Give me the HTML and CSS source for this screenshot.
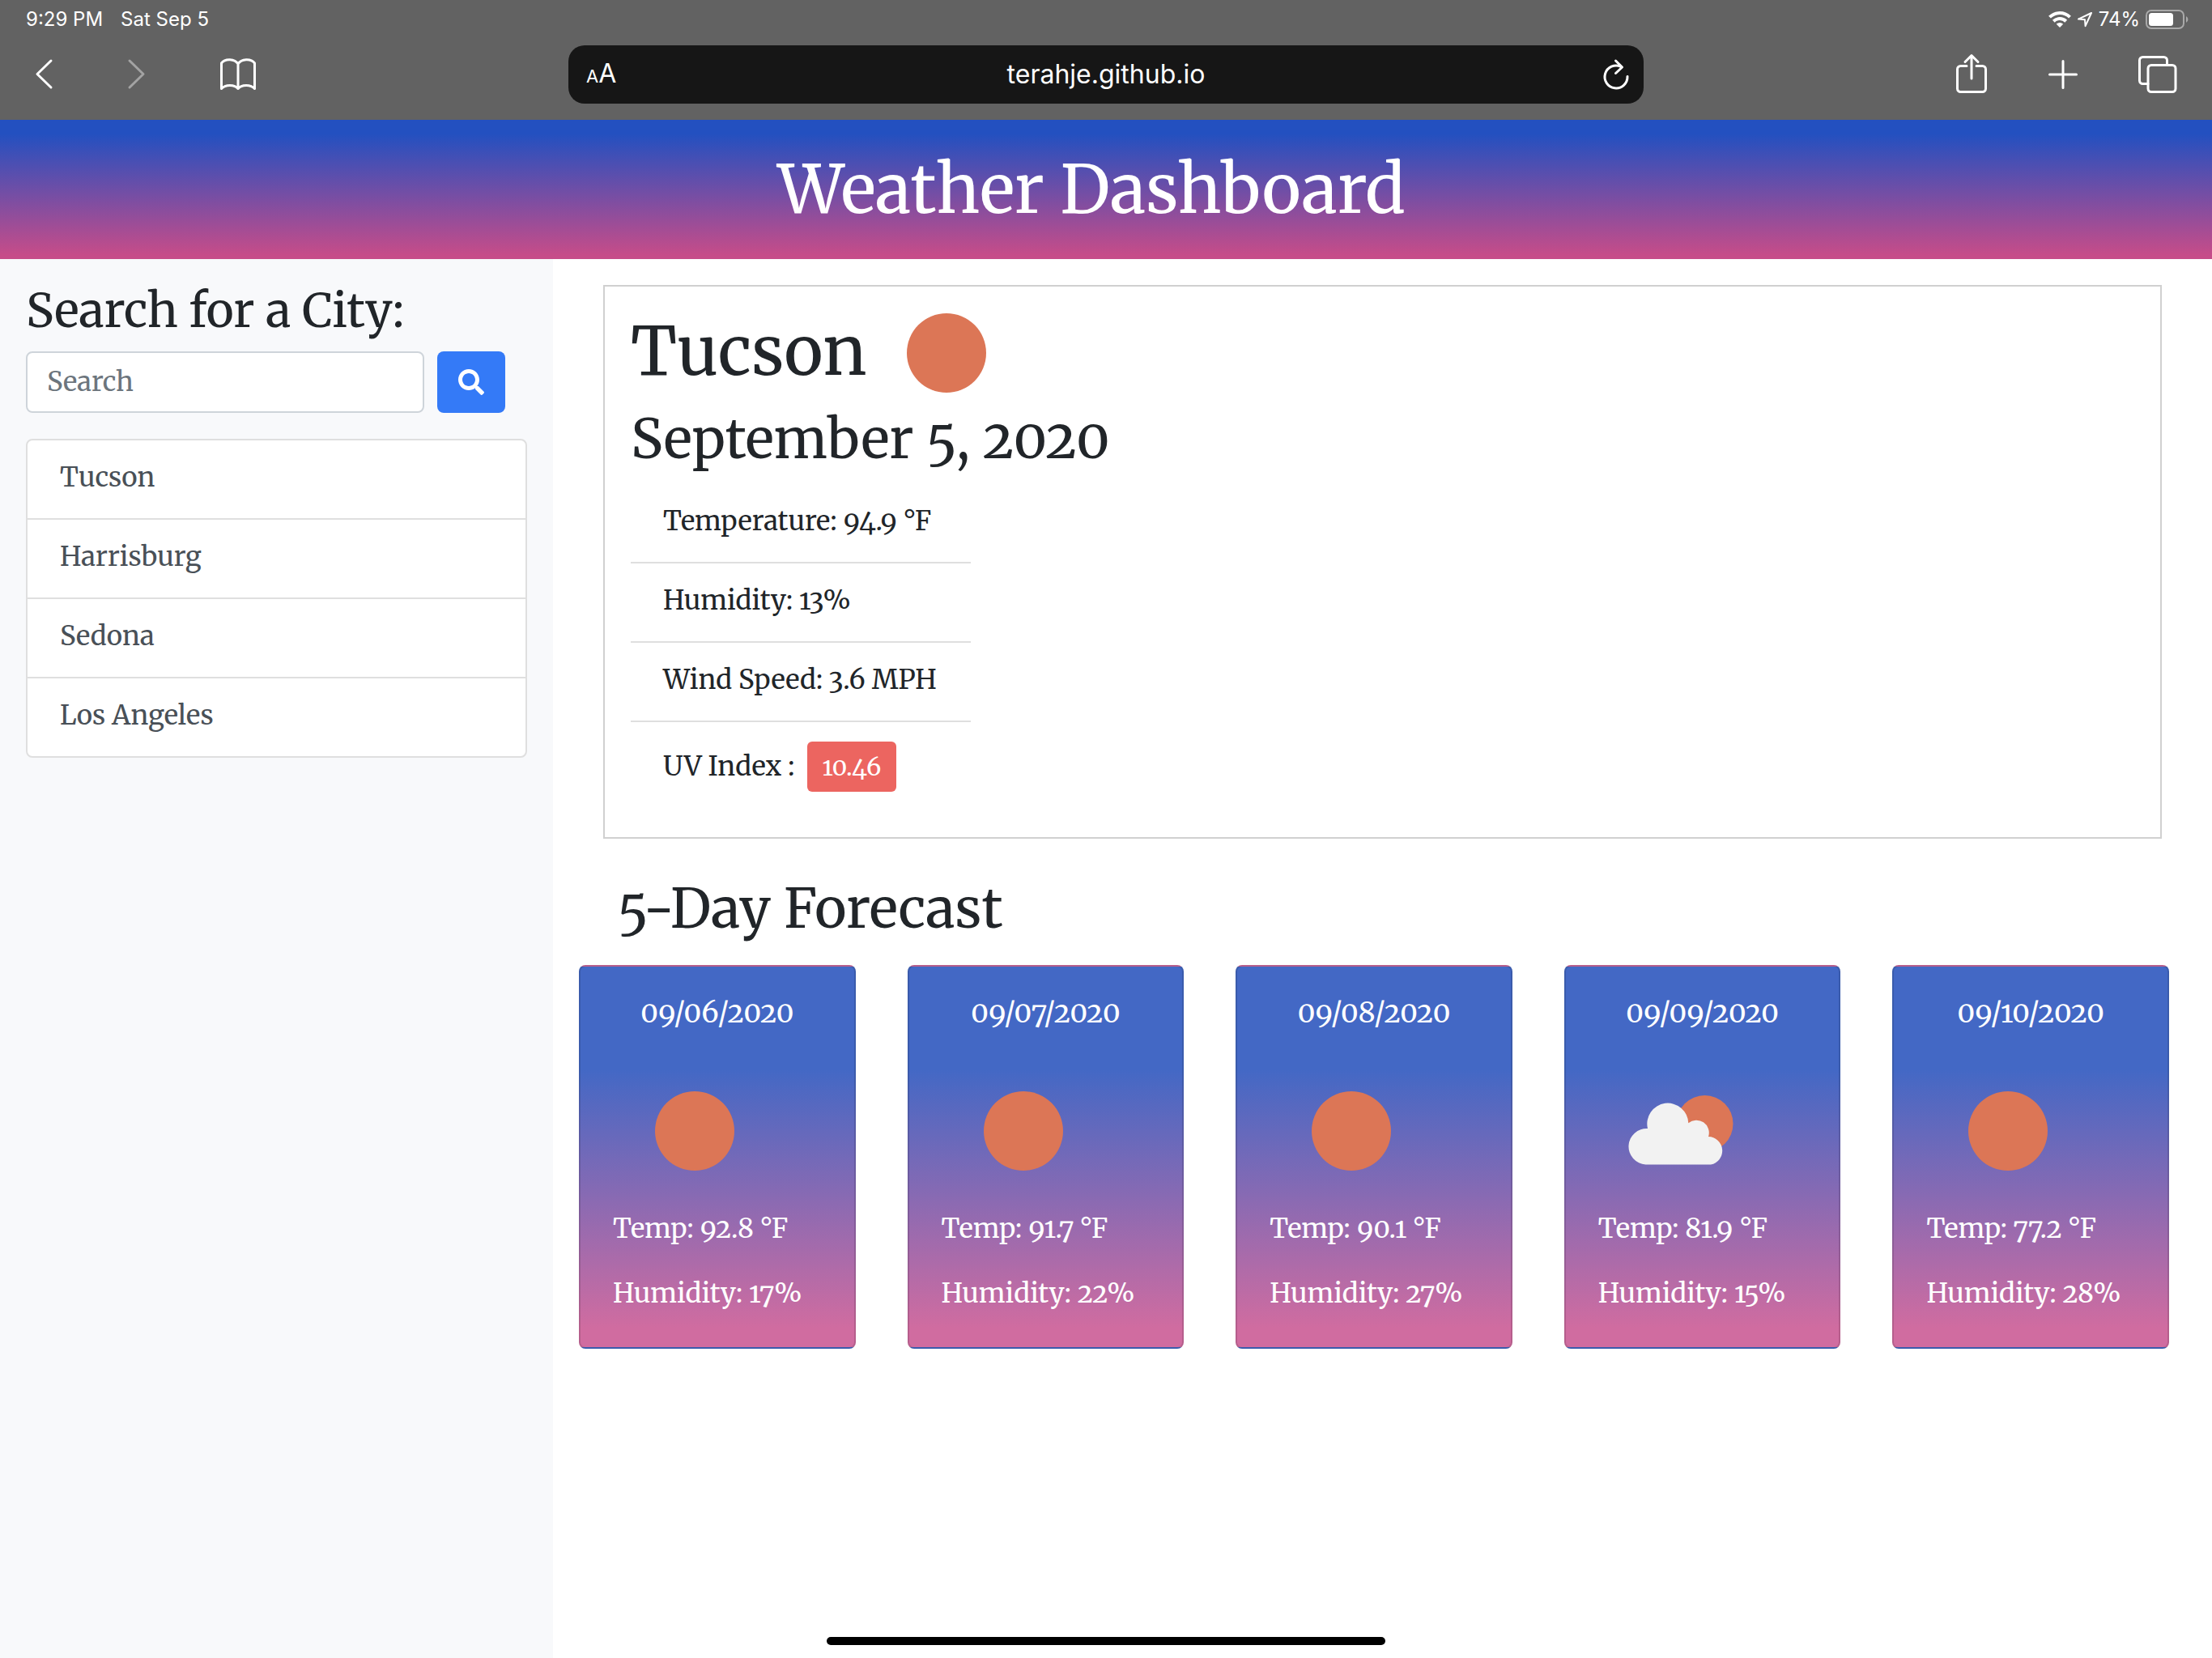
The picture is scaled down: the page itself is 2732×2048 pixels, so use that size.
FILE: index.html
```html
<!DOCTYPE html>
<html lang="en">
<head>
<meta charset="utf-8">
<meta name="viewport" content="width=device-width, initial-scale=1">
<title>Weather Dashboard</title>
<link rel="stylesheet" href="styles.css">
</head>
<body>
<div class="browser">
  <div class="status">
    <div class="status-side"><span>9:29 PM</span><span>Sat Sep 5</span></div>
    <div class="status-side status-right">
      <svg class="wifi" viewBox="0 0 28 22" aria-hidden="true"><g fill="none" stroke="#fff" stroke-width="4"><path d="M1.5 8.2a17.800 17.800 0 0 1 25 0"/><path d="M6.300 13.200a11 11 0 0 1 15.400 0"/></g><path d="M14 21l-4.200-4.300a6 6 0 0 1 8.400 0z" fill="#fff"/></svg>
      <svg class="locate" viewBox="0 0 20 20" aria-hidden="true"><path d="M18 2L2 9.600l8 .6.600 8z" fill="none" stroke="#fff" stroke-width="2" stroke-linejoin="round"/></svg>
      <span>74%</span>
      <svg class="battery" viewBox="0 0 54 24" aria-hidden="true"><rect x="1" y="1" width="46" height="22" rx="6" fill="none" stroke="#a9a9a9" stroke-width="2"/><rect x="4" y="4" width="30" height="16" rx="3.500" fill="#fff"/><path d="M50 8a4.500 4.500 0 0 1 0 8z" fill="#a9a9a9"/></svg>
    </div>
  </div>
  <div class="toolbar">
    <div class="tools">
      <button class="tool" aria-label="Back"><svg viewBox="0 0 64 56"><path d="M39 11L22 27.500L39 44"/></svg></button>
      <button class="tool dim" aria-label="Forward"><svg viewBox="0 0 64 56"><path d="M24 11L41 27.500L24 44"/></svg></button>
      <button class="tool book" aria-label="Bookmarks"><svg viewBox="0 0 64 56"><path d="M32 15C28 8.500 16 8 11.500 14V45.500C16 40 28 40 32 45.500C36 40 48 40 52.500 45.500V14C48 8 36 8.500 32 15zM32 15V45.500"/></svg></button>
    </div>
    <div class="address">
      <button class="reader" aria-label="Reader view"><span class="small-a">A</span>A</button>
      <input class="url" type="text" value="terahje.github.io" aria-label="Address">
      <button class="reload" aria-label="Reload"><svg viewBox="0 0 40 48"><path d="M34 26.500A14 14 0 1 1 26 14.300M19.500 7L27.500 15L19.500 22.500"/></svg></button>
    </div>
    <div class="tools tools-right">
      <button class="tool" aria-label="Share"><svg viewBox="0 0 64 56"><path d="M26 17.500H18.500a4 4 0 0 0-4 4V45.500a4 4 0 0 0 4 4H45.500a4 4 0 0 0 4-4V21.500a4 4 0 0 0-4-4H38M32 33V4.500M24 12.500L32 4.500L40 12.500"/></svg></button>
      <button class="tool" aria-label="New tab"><svg viewBox="0 0 64 56"><path d="M30 11.500V44.500M13.500 28H46.500"/></svg></button>
      <button class="tool" aria-label="Tabs"><svg viewBox="0 0 64 56"><path d="M43.500 16V10.500a4 4 0 0 0-4-4H13.500a4 4 0 0 0-4 4V35.500a4 4 0 0 0 4 4H20"/><rect x="20" y="16.500" width="34" height="33" rx="4"/></svg></button>
    </div>
  </div>
</div>

<header class="banner"><h1>Weather Dashboard</h1></header>

<div class="layout">
  <aside class="sidebar">
    <h3><label for="city">Search for a City:</label></h3>
    <form class="search">
      <input id="city" type="text" placeholder="Search">
      <button type="button" aria-label="Search"><svg viewBox="0 0 512 512"><path d="M505 442.700L405.300 343c-4.500-4.500-10.600-7-17-7H372c27.600-35.300 44-79.700 44-128C416 93.100 322.900 0 208 0S0 93.100 0 208s93.100 208 208 208c48.300 0 92.700-16.400 128-44v16.300c0 6.400 2.500 12.500 7 17l99.700 99.700c9.400 9.400 24.600 9.400 33.900 0l28.300-28.300c9.400-9.400 9.400-24.600.1-34zM208 336c-70.700 0-128-57.200-128-128 0-70.700 57.200-128 128-128 70.700 0 128 57.200 128 128 0 70.700-57.200 128-128 128z"/></svg></button>
    </form>
    <div class="cities">
      <a href="#">Tucson</a>
      <a href="#">Harrisburg</a>
      <a href="#">Sedona</a>
      <a href="#">Los Angeles</a>
    </div>
  </aside>

  <main class="content">
    <section class="current">
      <div class="place">
        <h2>Tucson</h2>
        <svg viewBox="0 0 100 104" role="img" aria-label="Clear sky"><circle cx="50" cy="54" r="49"/></svg>
      </div>
      <h3>September 5, 2020</h3>
      <ul>
        <li>Temperature: 94.9 °F</li>
        <li>Humidity: 13%</li>
        <li>Wind Speed: 3.6 MPH</li>
        <li class="uv">UV Index : <span class="badge">10.46</span></li>
      </ul>
    </section>

    <h2 class="forecast-title">5-Day Forecast</h2>
    <section class="forecast">
      <article class="day">
        <h5>09/06/2020</h5>
        <svg viewBox="0 0 200 200" role="img" aria-label="Clear sky"><circle cx="101" cy="101" r="49"/></svg>
        <p>Temp: 92.8 °F</p>
        <p>Humidity: 17%</p>
      </article>
      <article class="day">
        <h5>09/07/2020</h5>
        <svg viewBox="0 0 200 200" role="img" aria-label="Clear sky"><circle cx="101" cy="101" r="49"/></svg>
        <p>Temp: 91.7 °F</p>
        <p>Humidity: 22%</p>
      </article>
      <article class="day">
        <h5>09/08/2020</h5>
        <svg viewBox="0 0 200 200" role="img" aria-label="Clear sky"><circle cx="101" cy="101" r="49"/></svg>
        <p>Temp: 90.1 °F</p>
        <p>Humidity: 27%</p>
      </article>
      <article class="day">
        <h5>09/09/2020</h5>
        <svg viewBox="0 0 200 200" role="img" aria-label="Few clouds"><circle cx="131.500" cy="92" r="35"/><path class="cloud" d="M58.500 142.500A22.200 22.200 0 0 1 61 98A25.500 25.500 0 1 1 111.300 91.300A15.500 15.500 0 0 1 136 108A17.400 17.400 0 0 1 139 142.500z"/></svg>
        <p>Temp: 81.9 °F</p>
        <p>Humidity: 15%</p>
      </article>
      <article class="day">
        <h5>09/10/2020</h5>
        <svg viewBox="0 0 200 200" role="img" aria-label="Clear sky"><circle cx="101" cy="101" r="49"/></svg>
        <p>Temp: 77.2 °F</p>
        <p>Humidity: 28%</p>
      </article>
    </section>
  </main>
</div>
<div class="home-bar"></div>
</body>
</html>
```
FILE: styles.css
```css
* { box-sizing: border-box; }

body {
  margin: 0;
  min-height: 100vh;
  display: flex;
  flex-direction: column;
  background: #fff;
  color: #212529;
  font: 33px/48px "Merriweather", "DejaVu Serif Condensed", "DejaVu Serif", serif;
  font-variant-numeric: oldstyle-nums;
}

h1, h2, h3, h5, p, ul { margin: 0; padding: 0; font-weight: 400; }
button, input { font: inherit; }
svg { display: block; flex: none; }

/* Browser bar */
.browser {
  background: #626262;
  color: #fff;
  font-family: Inter, "Liberation Sans", sans-serif;
  font-variant-numeric: normal;
}
.status {
  height: 48px;
  padding: 0 28px 0 32px;
  display: flex;
  justify-content: space-between;
  font-size: 24px;
}
.status-side { display: flex; align-items: center; gap: 22px; }
.status-right { gap: 7px; }
.wifi { width: 28px; height: 22px; }
.locate { width: 20px; height: 20px; }
.battery { width: 54px; height: 24px; }

.toolbar {
  display: grid;
  grid-template-columns: 1fr 1328px 1fr;
  align-items: center;
  padding: 8px 0 20px;
}
.tools { display: flex; gap: 48px; padding-left: 24px; }
.tools-right { justify-content: flex-end; gap: 51px; padding: 0 35px 0 0; }
.tool, .reader, .reload { border: 0; padding: 0; background: none; color: #fff; }
.tool svg { width: 64px; height: 56px; }
.toolbar path, .toolbar rect {
  fill: none;
  stroke: currentColor;
  stroke-width: 3;
  stroke-linecap: round;
  stroke-linejoin: round;
}
.tools .dim { color: #a3a3a3; }
.book { margin-left: 14px; }
.address {
  display: flex;
  align-items: center;
  height: 72px;
  padding: 0 14px 0 22px;
  border-radius: 20px;
  background: #161616;
}
.reader { width: 32px; text-align: left; font-size: 32px; white-space: nowrap; }
.small-a { font-size: 22px; }
.url {
  flex: 1;
  min-width: 0;
  border: 0;
  padding: 0;
  background: none;
  color: #fff;
  font-size: 32px;
  text-align: center;
}
.reload svg { width: 40px; height: 48px; }

/* Page */
.banner {
  padding: 38px 36px 38px 0;
  background: linear-gradient(#2350c0 10%, #c64c89 97%);
  color: #fff;
  text-align: center;
}
.banner h1, .place h2 { font-size: 82px; line-height: 96px; }

.layout { flex: 1; display: grid; grid-template-columns: 25% 75%; }
.sidebar { padding: 32px; background: #f8f9fb; }
.sidebar h3 { font-size: 58px; line-height: 64px; margin-bottom: 18px; white-space: nowrap; }
.search { display: flex; gap: 16px; padding-right: 27px; margin-bottom: 32px; }
.search input {
  flex: 1;
  min-width: 0;
  height: 76px;
  padding: 0 24px 2px;
  border: 2px solid #ced4da;
  border-radius: 8px;
  background: #fff;
}
.search input::placeholder { color: #6c757d; opacity: 1; }
.search button {
  width: 84px;
  display: grid;
  place-items: center;
  border: 0;
  border-radius: 8px;
  background: #347af7;
}
.search svg { width: 32px; height: 32px; fill: #fff; }
.cities { border: 2px solid #dfdfdf; border-radius: 8px; background: #fff; overflow: hidden; }
.cities a { display: block; padding: 22px 40px 26px; color: #495057; text-decoration: none; }
.cities a + a { border-top: 2px solid #dfdfdf; }

.content { padding: 32px 53px 32px 32px; }
.content svg { fill: #dc7656; }
.content .cloud { fill: #f2f2f2; }
.current { margin: 0 9px 0 30px; padding: 32px; border: 2px solid #d0d0d0; }
.place { display: flex; align-items: center; gap: 48px; height: 96px; margin-bottom: 22px; }
.place svg { width: 100px; height: 104px; }
.current h3, .forecast-title { font-size: 67px; line-height: 76px; }
.current h3 { margin-bottom: 18px; }
.current ul { width: 420px; list-style: none; }
.current li { padding: 22px 0 26px 40px; border-bottom: 2px solid #dfdfdf; white-space: nowrap; }
.current .uv { display: flex; align-items: center; gap: 16px; padding: 24px 0 24px 40px; border: 0; }
.badge {
  padding: 7px 18px;
  border-radius: 6px;
  background: #ec6560;
  color: #fff;
  font-size: 30px;
}

.forecast-title { margin: 48px 0 32px 48px; }
.forecast { display: grid; grid-template-columns: repeat(5, 1fr); gap: 64px; }
.day {
  padding: 38px 40px 42px;
  border: 2px solid rgba(0, 0, 0, .125);
  border-radius: 8px;
  background: linear-gradient(#4368c5 27%, #d06ca0 95%);
  color: #fff;
  white-space: nowrap;
}
.day h5 { margin-bottom: 26px; font-size: 35px; line-height: 38px; text-align: center; }
.day svg { width: 200px; height: 200px; margin-bottom: -2px; }
.day p + p { margin-top: 32px; }

.home-bar {
  position: fixed;
  bottom: 16px;
  left: 50%;
  width: 690px;
  height: 10px;
  margin-left: -345px;
  border-radius: 5px;
  background: #000;
}
```
